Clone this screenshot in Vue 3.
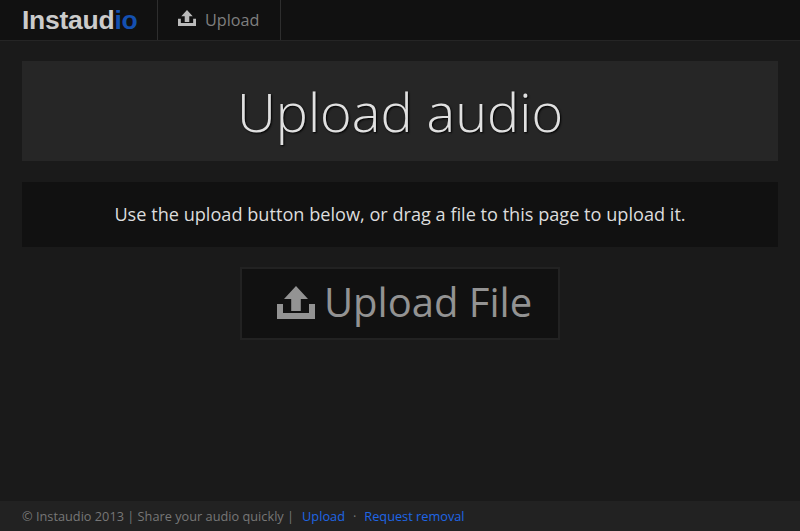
<script setup>
const title = 'Upload audio'
const uploadIcon = 'M19 0 31 13H23.8V25H14.2V13H7ZM0 18H6V27H32V18H38V33H0Z'
</script>

<template>
  <div class="page">
    <header class="navbar">
      <a class="brand">Instaud<span class="accent">io</span></a>
      <a class="nav-item">
        <svg class="nav-icon" viewBox="0 0 38 33" preserveAspectRatio="none"><path fill="currentColor" :d="uploadIcon"/></svg>
        <span>Upload</span>
      </a>
    </header>
    <main class="content">
      <section class="hero"><h1>{{ title }}</h1></section>
      <p class="well">Use the upload button below, or drag a file to this page to upload it.</p>
      <button class="upload">
        <svg class="btn-icon" viewBox="0 0 38 33"><path fill="currentColor" :d="uploadIcon"/></svg>
        <span class="label">Upload File</span>
      </button>
    </main>
    <footer class="footer">
      <span>© Instaudio 2013 | Share your audio quickly |</span>
      <a class="first">Upload</a>
      <span class="dot">·</span>
      <a>Request removal</a>
    </footer>
  </div>
</template>

<style scoped>
.page {
  height: 531px;
  display: flex;
  flex-direction: column;
  background: #1a1a1a;
  font-family: "Open Sans", sans-serif;
  overflow: hidden;
}
.navbar {
  height: 40px;
  flex: none;
  display: flex;
  background: #111;
  border-bottom: 1px solid #252525;
  padding-left: 22px;
}
.brand {
  width: 135px;
  font-family: "Liberation Sans", sans-serif;
  font-weight: 700;
  font-size: 26.5px;
  line-height: 40px;
  letter-spacing: -0.25px;
  color: #cbcbcb;
}
.accent { color: #1450b0; }
.nav-item {
  display: flex;
  align-items: center;
  gap: 9px;
  width: 124px;
  box-sizing: border-box;
  padding-left: 20px;
  border-left: 1px solid #2e2e2e;
  border-right: 1px solid #2e2e2e;
  color: #7f7f7f;
  font-size: 16.2px;
}
.nav-icon { width: 18px; height: 16px; color: #bbb; margin-bottom: 4px; }
.content {
  flex: 1;
  display: flex;
  flex-direction: column;
  align-items: center;
  padding: 20px 22px 0;
}
.hero {
  align-self: stretch;
  height: 100px;
  background: #262626;
  display: flex;
  align-items: center;
  justify-content: center;
}
h1 {
  margin: 0;
  font-size: 54px;
  font-weight: 300;
  line-height: 100px;
  color: #e0e0e0;
  text-shadow: 1px 1px 2px #000;
}
.well {
  align-self: stretch;
  height: 65px;
  margin: 21px 0 20px;
  background: #111;
  color: #ddd;
  font-size: 18.15px;
  line-height: 65px;
  text-align: center;
}
.upload {
  width: 320px;
  height: 73px;
  box-sizing: border-box;
  display: flex;
  align-items: center;
  justify-content: center;
  gap: 9px;
  background: #111;
  border: 2px solid #222;
  color: #939393;
  font-family: inherit;
  font-size: 40px;
  padding: 0 0 0 9px;
}
.label { margin-bottom: 5px; }
.btn-icon { width: 38px; height: 33px; flex: none; margin-bottom: 3px; }
.footer {
  height: 30px;
  flex: none;
  background: #222;
  padding-left: 22px;
  display: flex;
  align-items: center;
  font-size: 12.75px;
  color: #777;
}
.footer a { color: #1f66e6; }
.first { margin-left: 8px; }
.dot { margin: 0 8px 0 8px; }
</style>
